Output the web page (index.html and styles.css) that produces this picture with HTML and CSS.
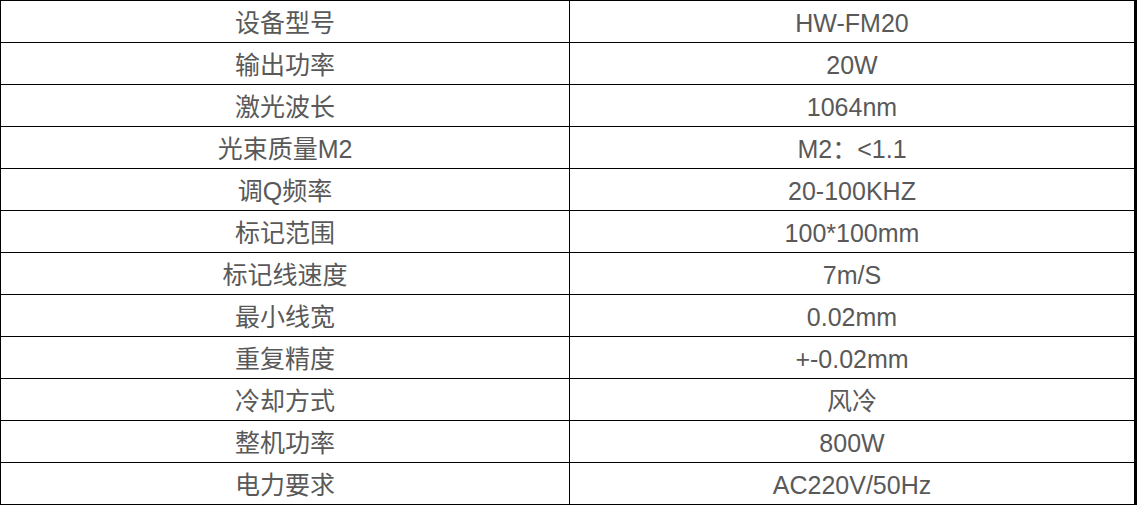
FILE: index.html
```html
<!DOCTYPE html>
<html lang="zh-CN">
<head>
<meta charset="utf-8">
<title>参数表</title>
<link rel="stylesheet" href="styles.css">
</head>
<body>
<table class="spec">
<tbody>
<tr><td class="k">设备型号</td><td class="v">HW-FM20</td></tr>
<tr><td class="k">输出功率</td><td class="v">20W</td></tr>
<tr><td class="k">激光波长</td><td class="v">1064nm</td></tr>
<tr><td class="k">光束质量M2</td><td class="v">M2：&lt;1.1</td></tr>
<tr><td class="k">调Q频率</td><td class="v">20-100KHZ</td></tr>
<tr><td class="k">标记范围</td><td class="v">100*100mm</td></tr>
<tr><td class="k">标记线速度</td><td class="v">7m/S</td></tr>
<tr><td class="k">最小线宽</td><td class="v">0.02mm</td></tr>
<tr><td class="k">重复精度</td><td class="v">+-0.02mm</td></tr>
<tr><td class="k">冷却方式</td><td class="v">风冷</td></tr>
<tr><td class="k">整机功率</td><td class="v">800W</td></tr>
<tr><td class="k">电力要求</td><td class="v">AC220V/50Hz</td></tr>
</tbody>
</table>
</body>
</html>
```

FILE: styles.css
```css
html, body {
  margin: 0;
  padding: 0;
  background: #fff;
}

.spec {
  width: 1137px;
  border-collapse: collapse;
  table-layout: fixed;
  font-family: "Liberation Sans", "Noto Sans CJK SC", sans-serif;
  font-size: 25px;
  color: #595959;
  border-right: 3px solid #000;
  border-bottom: 3px solid #000;
}

.spec td {
  border: 1px solid #000;
  height: 38px;
  padding: 3px 0 0;
  text-align: center;
  vertical-align: middle;
  line-height: 38px;
}

.spec td.k {
  width: 568px;
}
```
